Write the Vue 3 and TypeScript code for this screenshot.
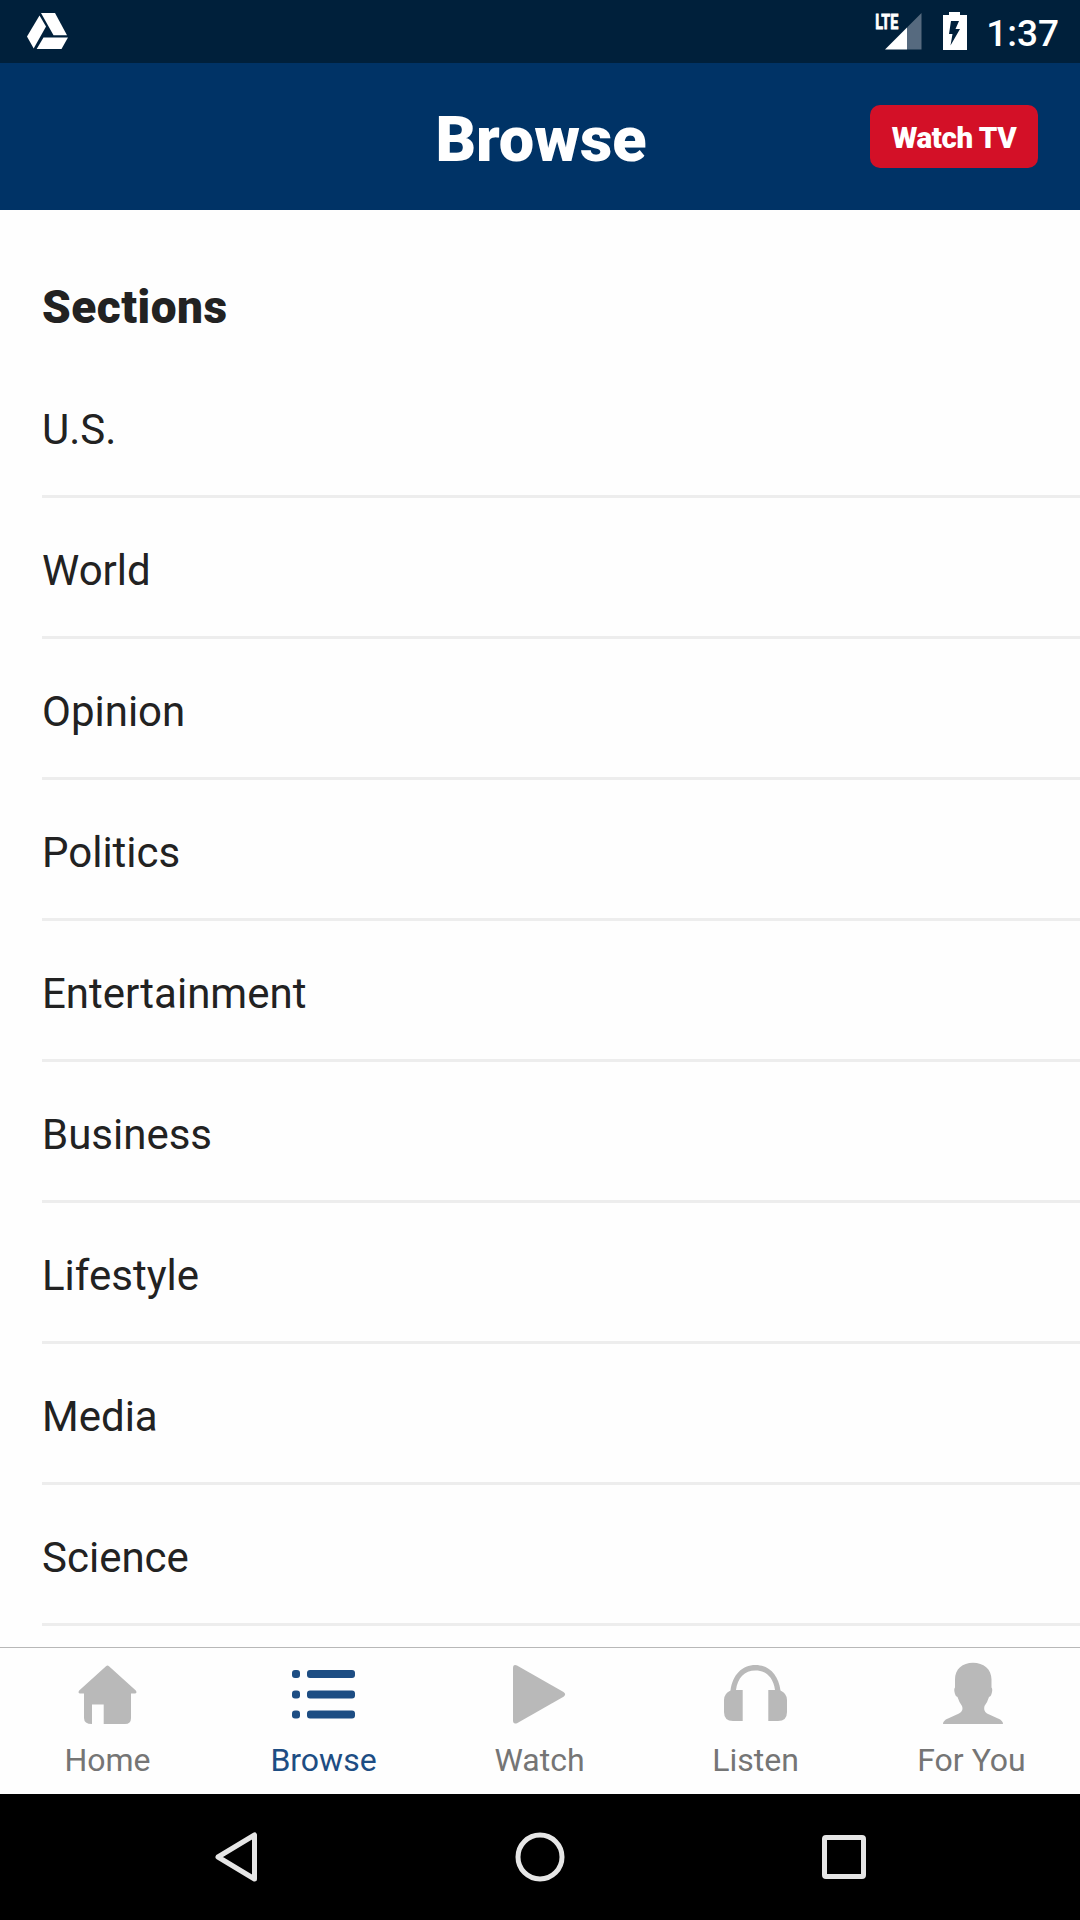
<script setup lang="ts">
type TabName = 'Home' | 'Browse' | 'Watch' | 'Listen' | 'For You'

const sections: string[] = [
  'U.S.', 'World', 'Opinion', 'Politics', 'Entertainment',
  'Business', 'Lifestyle', 'Media', 'Science',
]
const tabs: TabName[] = ['Home', 'Browse', 'Watch', 'Listen', 'For You']
const active: TabName = 'Browse'
</script>

<template>
  <div class="screen">
    <div class="status">
      <svg class="drive" width="42" height="38" viewBox="0 0 42 38" fill="#fff">
        <path d="M14 1h14l12 22.300H26.500z" />
        <path d="M12.500 3.500L19 14.500 6.700 36.500 0 24.500z" />
        <path d="M16.500 25.500H41L34.500 37H9.700z" />
      </svg>
      <div class="indicators">
        <svg class="signal" width="60" height="52" viewBox="-14 -12 60 52">
          <path d="M45.500 1v36.500H31V15.500z" fill="#566a7f" />
          <path d="M31 15.500v22H9z" fill="#fff" />
          <text transform="translate(-0.800 16.800) scale(.7 1)" font-size="20.500" font-weight="700" fill="#fff" stroke="#fff" stroke-width=".8">LTE</text>
        </svg>
        <svg class="battery" width="26" height="40" viewBox="0 0 26 40">
          <path fill="#fff" d="M7 0h11v3h7v35H1V3h6z" />
          <path fill="#00203b" d="M9 9h8l-3.500 8H18L8.500 33.500l2-11.500H7z" />
        </svg>
        <span class="clock">1:37</span>
      </div>
    </div>

    <header class="header">
      <h1>Browse</h1>
      <button class="watch" type="button">Watch TV</button>
    </header>

    <main class="content">
      <h2>Sections</h2>
      <ul>
        <li v-for="name in sections" :key="name">{{ name }}</li>
      </ul>
    </main>

    <nav class="tabs">
      <div v-for="tab in tabs" :key="tab" class="tab" :class="{ active: tab === active }">
        <svg width="72" height="72" viewBox="0 0 72 72" fill="currentColor">
          <path v-if="tab === 'Home'" d="M34 6.200q1.500-1.200 3 0L63.800 30.500q1.800 2.500-1 3H59V58q0 6-6 6H31.700V44.500H20V64q-8 0-8-6V33.500H8.200q-2.800-.5-1-3z" />
          <g v-else-if="tab === 'Browse'">
            <rect x="4" y="10" width="8" height="8" rx="3" />
            <rect x="4" y="30.500" width="8" height="8" rx="3" />
            <rect x="4" y="50.500" width="8" height="8" rx="3" />
            <rect x="19" y="10" width="48" height="8" rx="3" />
            <rect x="19" y="30.500" width="48" height="8" rx="3" />
            <rect x="19" y="50.500" width="48" height="8" rx="3" />
          </g>
          <path v-else-if="tab === 'Watch'" d="M9 8q0-4 4-2.500L59.500 32q3.300 2.300 0 4.700L13 63.200Q9 64.500 9 60.500z" />
          <path v-else-if="tab === 'Listen'" d="M10.500 30.500C12.500 15 22 5 35.500 5S58.500 15 60.500 30.500Q67 33.500 67 40V52q0 9-9 9H48.300V30H55C53.500 18 46.500 10.500 35.500 10.500S17.500 18 16 30H22.700V61H13q-9 0-9-9V40q0-6.500 6.500-9.500z" />
          <path v-else d="M37 2.700C47.500 2.700 55.500 9 55.500 19.500V27.500Q57 29 55.500 34Q55 36.500 53 37Q51.500 42 48.500 46Q47 51 51 53.500L62 58.500Q67 60.500 67 64H7Q7 60.500 12 58.500L23 53.500Q28 51 26 46Q23 42 21.500 37Q19.500 36.500 19 34Q17.500 29 19 27.500V19.500C19 9 26.500 2.700 37 2.700z" />
        </svg>
        <span>{{ tab }}</span>
      </div>
    </nav>

    <div class="system">
      <svg width="60" height="60" viewBox="0 0 60 60"><path d="M48.500 8V52L12 30z" class="stroke" /></svg>
      <svg width="60" height="60" viewBox="0 0 60 60"><circle cx="30" cy="30" r="22" class="stroke" /></svg>
      <svg width="60" height="60" viewBox="0 0 60 60"><rect x="10.500" y="10.500" width="39" height="39" rx="1.500" class="stroke" /></svg>
    </div>
  </div>
</template>

<style>
body { margin: 0; }
</style>

<style scoped>
.screen {
  width: 1080px;
  height: 1920px;
  display: flex;
  flex-direction: column;
  overflow: hidden;
  background: #fefefe;
  color: #222;
  font-family: Roboto, "Liberation Sans", sans-serif;
}
.status {
  flex: none;
  height: 63px;
  box-sizing: border-box;
  padding: 0 21px 0 27px;
  display: flex;
  justify-content: space-between;
  align-items: flex-start;
  background: #00203b;
}
.drive { margin-top: 12px; }
.indicators { display: flex; align-items: flex-start; }
.signal { overflow: visible; }
.battery { margin: 12px 0 0 20px; }
.clock {
  margin: 12px 0 0 18px;
  font-size: 37px;
  line-height: 43px;
  font-weight: 500;
  color: #fff;
}
.header {
  flex: none;
  height: 147px;
  display: grid;
  grid-template-columns: 1fr auto 1fr;
  align-items: center;
  background: #003366;
  color: #fff;
}
h1 {
  grid-column: 2;
  margin: 6px 0 0;
  padding-left: 2px;
  font-size: 63px;
  line-height: 74px;
  font-weight: 900;
}
.watch {
  justify-self: end;
  margin: 0 42px 0 0;
  width: 168px;
  height: 63px;
  padding: 2px 0 0;
  border: 0;
  border-radius: 10px;
  background: #d31027;
  color: #fff;
  font: 900 29.500px/34px Roboto, sans-serif;
  letter-spacing: -.4px;
}
.content {
  flex: 1;
  min-height: 0;
  padding-left: 42px;
  overflow: hidden;
}
h2 {
  margin: 0;
  height: 147px;
  box-sizing: border-box;
  padding-top: 70px;
  font-size: 46px;
  line-height: 54px;
  font-weight: 900;
  letter-spacing: .5px;
}
ul { margin: 0; padding: 0; list-style: none; }
li {
  height: 141px;
  box-sizing: border-box;
  padding-top: 7px;
  border-bottom: 3px solid #ededed;
  font-size: 42px;
  line-height: 132px;
}
.tabs {
  flex: none;
  height: 147px;
  box-sizing: border-box;
  border-top: 1px solid #b8b8b8;
  display: flex;
}
.tab {
  flex: 1;
  display: flex;
  flex-direction: column;
  align-items: center;
  padding-top: 12px;
  color: #b9b9b9;
}
.tab span {
  margin-top: 10px;
  padding-right: 1px;
  font-size: 32px;
  line-height: 36px;
  color: #757575;
}
.tab.active, .tab.active span { color: #1d4d83; }
.system {
  flex: none;
  height: 126px;
  box-sizing: border-box;
  padding: 0 206px;
  display: flex;
  align-items: center;
  justify-content: space-between;
  background: #000;
}
.stroke { fill: none; stroke: #e6e6e6; stroke-width: 5; stroke-linejoin: round; }
</style>
